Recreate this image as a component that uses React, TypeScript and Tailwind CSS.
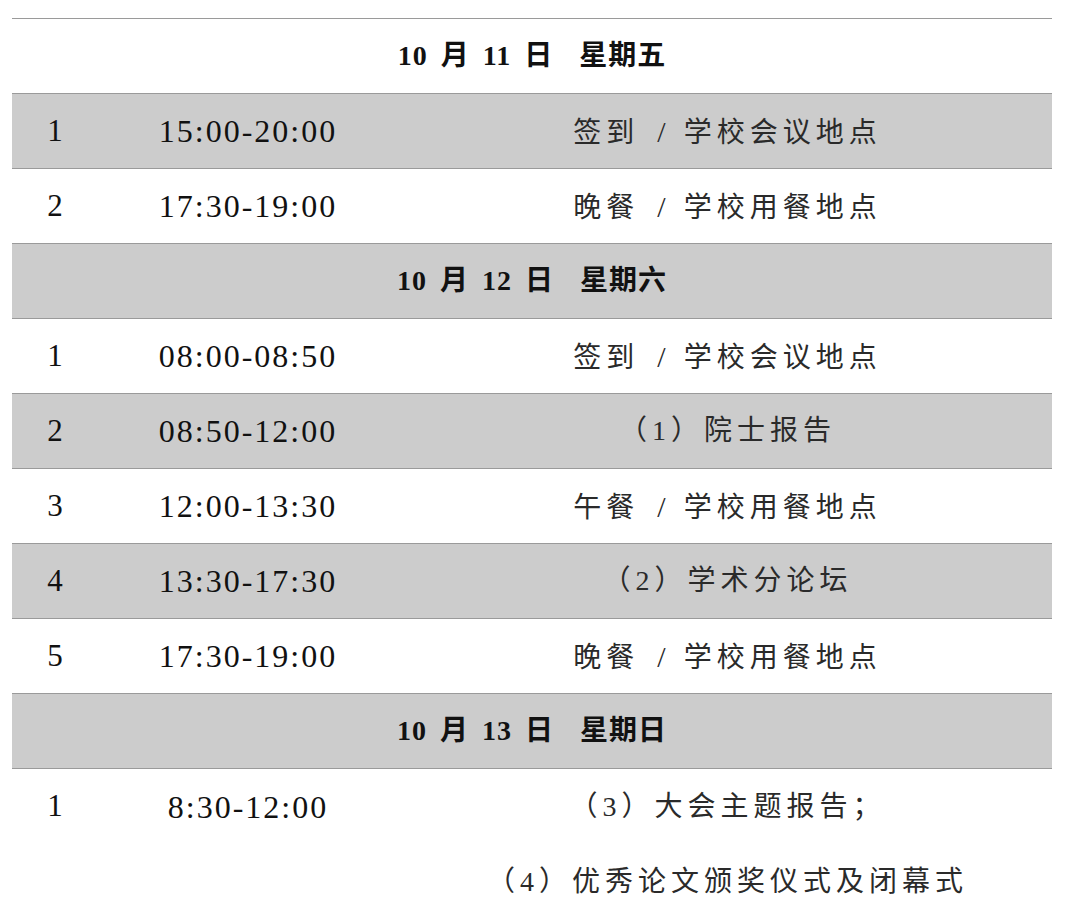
import React from 'react'

type Item = { no: string; time: string; what: React.ReactNode; shade: boolean }
type Day = { day: React.ReactNode; shade: boolean }
type Row = Item | Day

const Slash = () => <span className="mx-[18px] text-[30px] tracking-normal">/</span>

const rows: Row[] = [
  { day: '10 月 11 日  星期五', shade: false },
  { no: '1', time: '15:00-20:00', what: <>签到<Slash />学校会议地点</>, shade: true },
  { no: '2', time: '17:30-19:00', what: <>晚餐<Slash />学校用餐地点</>, shade: false },
  { day: '10 月 12 日  星期六', shade: true },
  { no: '1', time: '08:00-08:50', what: <>签到<Slash />学校会议地点</>, shade: false },
  { no: '2', time: '08:50-12:00', what: '（1）院士报告', shade: true },
  { no: '3', time: '12:00-13:30', what: <>午餐<Slash />学校用餐地点</>, shade: false },
  { no: '4', time: '13:30-17:30', what: '（2）学术分论坛', shade: true },
  { no: '5', time: '17:30-19:00', what: <>晚餐<Slash />学校用餐地点</>, shade: false },
  { day: '10 月 13 日  星期日', shade: true },
]

export default function App() {
  return (
    <div className="h-[910px] overflow-hidden bg-white px-[12px] pt-[18px] font-['Liberation_Serif','Noto_Sans_CJK_SC',serif] text-[#111]">
      <div className="w-[1040px]">
        {rows.map((row, i) => (
          <div
            key={i}
            className={`flex h-[75px] items-center border-t-[1.5px] border-[#9a9a9a] ${row.shade ? 'bg-[#cccccc]' : 'bg-white'}`}
          >
            {'day' in row ? (
              <div className="w-full whitespace-pre text-center text-[28px] font-bold tracking-[1px] [word-spacing:5px]">
                {row.day}
              </div>
            ) : (
              <>
                <div className="w-[86px] text-center text-[31px]">{row.no}</div>
                <div className="w-[300px] text-center text-[32px] tracking-[2px]">{row.time}</div>
                <div className="flex-1 pl-[5px] text-center text-[28px] tracking-[5px] text-[#2a2a2a]">{row.what}</div>
              </>
            )}
          </div>
        ))}

        <div className="flex border-t-[1.5px] border-[#9a9a9a] bg-white">
          <div className="flex h-[75px] w-[86px] items-center justify-center text-[31px]">1</div>
          <div className="flex h-[75px] w-[300px] items-center justify-center text-[32px] tracking-[2px]">8:30-12:00</div>
          <div className="flex flex-1 flex-col pl-[5px] text-[28px] tracking-[5px] text-[#2a2a2a]">
            <div className="flex h-[75px] items-center justify-center">（3）大会主题报告；</div>
            <div className="flex h-[75px] items-center justify-center">（4）优秀论文颁奖仪式及闭幕式</div>
          </div>
        </div>
      </div>
    </div>
  )
}
